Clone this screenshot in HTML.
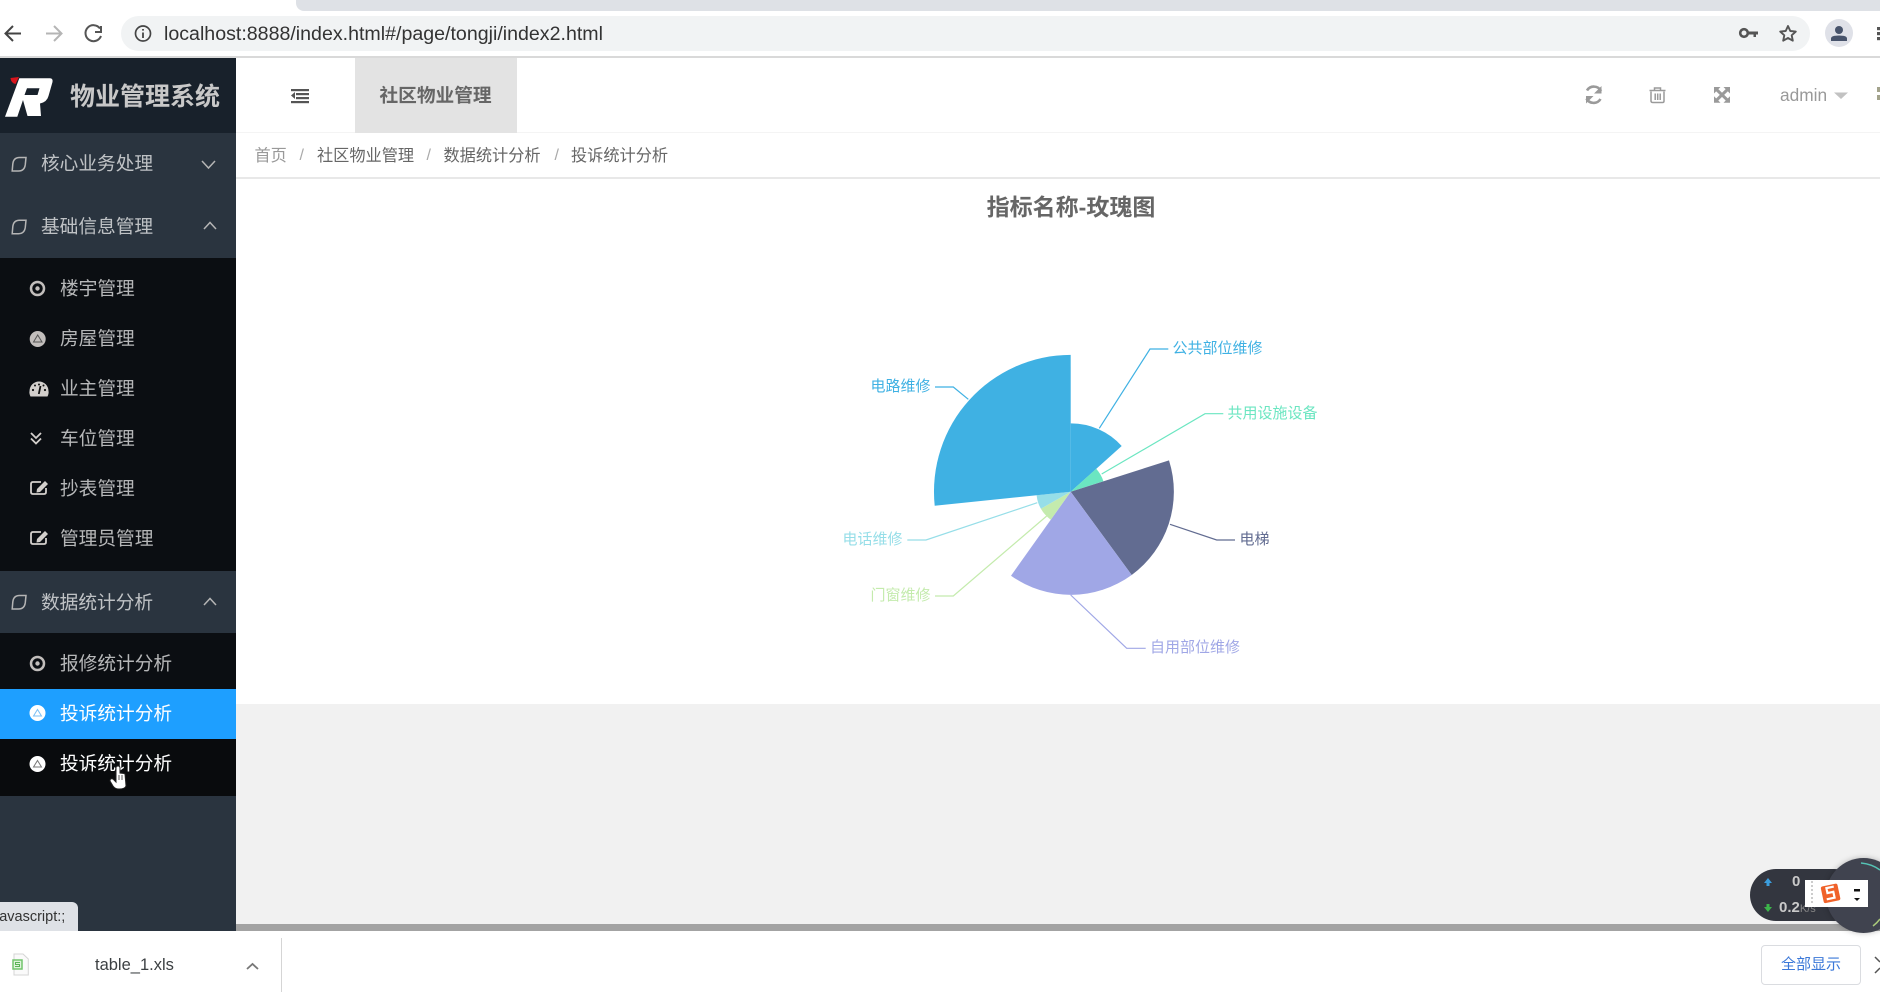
<!DOCTYPE html>
<html lang="zh"><head><meta charset="utf-8"><title>物业管理系统</title>
<style>
*{margin:0;padding:0;box-sizing:border-box}
html,body{width:1880px;height:996px;overflow:hidden;background:#fff;font-family:"Liberation Sans","Noto Sans CJK SC",sans-serif}
.a{position:absolute;white-space:nowrap}
.t{position:absolute;white-space:nowrap;line-height:24px;height:24px}
.m{color:rgba(255,255,255,.7);font-size:18.7px}
svg{position:absolute;left:0;top:0;overflow:visible}
</style></head><body>
<div class="a" style="left:296px;top:0;width:1584px;height:11px;background:#dee1e6;border-bottom-left-radius:8px"></div>
<div class="a" style="left:121px;top:16px;width:1689px;height:35px;background:#f1f3f4;border-radius:18px"></div>
<div class="a" style="left:0;top:56px;width:1880px;height:2px;background:#d9d9d9"></div>
<div class="t" style="left:164px;top:21.500px;font-size:19.600px;color:#333">localhost:8888/index.html#/page/tongji/index2.html</div>

<div class="a" style="left:0;top:58px;width:236px;height:873px;background:#2a343f"></div>
<div class="a" style="left:0;top:58px;width:236px;height:75px;background:#18212b"></div>
<div class="a" style="left:0;top:258px;width:236px;height:313px;background:#0b0e12"></div>
<div class="a" style="left:0;top:633px;width:236px;height:163px;background:#0b0e12"></div>
<div class="a" style="left:0;top:689px;width:236px;height:50px;background:#1e9fff"></div>
<div class="a" style="left:0;top:739px;width:236px;height:57px;background:#090b0d"></div>

<div class="t" style="left:70px;top:85px;font-size:25px;font-weight:700;color:#c8c8c8">物业管理系统</div>
<div class="t m" style="left:41px;top:152px">核心业务处理</div>
<div class="t m" style="left:41px;top:215px">基础信息管理</div>
<div class="t m" style="left:60px;top:277px">楼宇管理</div>
<div class="t m" style="left:60px;top:327px">房屋管理</div>
<div class="t m" style="left:60px;top:377px">业主管理</div>
<div class="t m" style="left:60px;top:427px">车位管理</div>
<div class="t m" style="left:60px;top:477px">抄表管理</div>
<div class="t m" style="left:60px;top:527px">管理员管理</div>
<div class="t m" style="left:41px;top:590.500px">数据统计分析</div>
<div class="t m" style="left:60px;top:652px">报修统计分析</div>
<div class="t m" style="left:60px;top:702px;color:#fff">投诉统计分析</div>
<div class="t m" style="left:60px;top:752px;color:#fff">投诉统计分析</div>

<div class="a" style="left:236px;top:132px;width:1644px;height:1px;background:#f4f4f4"></div>
<div class="a" style="left:355px;top:58px;width:162px;height:75px;background:#e3e3e3"></div>
<div class="t" style="left:379.500px;top:84px;font-size:18.700px;font-weight:700;color:#666">社区物业管理</div>
<div class="t" style="left:1780px;top:83px;font-size:17.300px;color:#999">admin</div>

<div class="t" style="left:254.500px;top:144px;font-size:16.200px;color:#999">首页</div>
<div class="t" style="left:299.500px;top:144px;font-size:16px;color:#aaa">/</div>
<div class="t" style="left:317px;top:144px;font-size:16.200px;color:#666">社区物业管理</div>
<div class="t" style="left:426.500px;top:144px;font-size:16px;color:#aaa">/</div>
<div class="t" style="left:443.500px;top:144px;font-size:16.200px;color:#666">数据统计分析</div>
<div class="t" style="left:554.500px;top:144px;font-size:16px;color:#aaa">/</div>
<div class="t" style="left:571px;top:144px;font-size:16.200px;color:#666">投诉统计分析</div>
<div class="a" style="left:236px;top:177px;width:1644px;height:2px;background:#e8e8e8"></div>

<div class="a" style="left:236px;top:704px;width:1644px;height:227px;background:#f1f1f1"></div>
<div class="a" style="left:236px;top:924px;width:1644px;height:7px;background:#a3a3a3"></div>
<div class="t" style="left:836px;top:195px;width:470px;text-align:center;font-size:23px;font-weight:700;color:#666">指标名称-玫瑰图</div>

<svg width="1880" height="996" viewBox="0 0 1880 996">
<!-- chart -->
<path d="M1070.7 491.7L1070.7 423.4A68.3 68.3 0 0 1 1121.7 446Z" fill="#3fb1e3"/>
<path d="M1070.7 491.7L1096.2 468.8A34.3 34.3 0 0 1 1103.4 481.3Z" fill="#6be6c1"/>
<path d="M1070.7 491.7L1169 460.4A103.3 103.3 0 0 1 1131.7 575Z" fill="#626c91"/>
<path d="M1070.7 491.7L1131.7 575A103.3 103.3 0 0 1 1011 575.7Z" fill="#a0a7e6"/>
<path d="M1070.7 491.7L1050.8 519.7A34.3 34.3 0 0 1 1040.9 508.8Z" fill="#c4ebad"/>
<path d="M1070.7 491.7L1040.9 508.8A34.3 34.3 0 0 1 1036.6 495.2Z" fill="#96dee8"/>
<path d="M1070.7 491.7L934.7 505.7A136.8 136.8 0 0 1 1070.7 354.9Z" fill="#3fb1e3"/>
<g fill="none" stroke-width="1.2">
<path d="M1099.3 428.3L1150 349H1168.3" stroke="#3fb1e3"/>
<path d="M1101.7 474L1205 413.7H1223.3" stroke="#6be6c1"/>
<path d="M1170 524.3L1216.7 540H1235" stroke="#626c91"/>
<path d="M1070.7 595L1126.7 648.3H1145.7" stroke="#a0a7e6"/>
<path d="M1046.7 516L953.3 596H935" stroke="#c4ebad"/>
<path d="M1037.3 502.7L926 540H907.3" stroke="#96dee8"/>
<path d="M968.3 399.3L953.3 387H935" stroke="#3fb1e3"/>
</g>
<g font-family="Liberation Sans,Noto Sans CJK SC,sans-serif" font-size="15">
<text x="1172.500" y="353" fill="#3fb1e3">公共部位维修</text>
<text x="1227.500" y="418" fill="#6be6c1">共用设施设备</text>
<text x="1239.500" y="544" fill="#626c91">电梯</text>
<text x="1150" y="652" fill="#a0a7e6">自用部位维修</text>
<text x="930.500" y="600" fill="#c4ebad" text-anchor="end">门窗维修</text>
<text x="902.500" y="544" fill="#96dee8" text-anchor="end">电话维修</text>
<text x="930.500" y="391" fill="#3fb1e3" text-anchor="end">电路维修</text>
</g>

<!-- browser icons -->
<g fill="none" stroke-width="2">
<path d="M21 33.500H6M13 26L5.500 33.500L13 41" stroke="#444"/>
<path d="M46 33.500H61M54 26L61.500 33.500L54 41" stroke="#b5b5b5"/>
<path d="M100 28.500A8 8 0 1 0 101 36M101 26V32H95" stroke="#555"/>
<circle cx="143" cy="33.500" r="7.500" stroke="#444" stroke-width="1.700"/>
<path d="M143 32.500V38M143 29V30.600" stroke="#444" stroke-width="1.800"/>
</g>
<circle cx="1744" cy="33" r="3.800" fill="none" stroke="#555" stroke-width="2.600"/>
<path d="M1747 31.500H1758V34.500H1756V37H1753.500V34.500H1747Z" fill="#555"/>
<path d="M1788 26L1790.300 31L1795.800 31.600L1791.700 35.300L1792.800 40.700L1788 38L1783.200 40.700L1784.300 35.300L1780.200 31.600L1785.700 31Z" fill="none" stroke="#555" stroke-width="1.900" stroke-linejoin="round"/>
<circle cx="1839" cy="33" r="14" fill="#dfe1e8"/>
<circle cx="1839" cy="30" r="4" fill="#47536b"/>
<path d="M1831 41V38.500Q1831 35.500 1839 35.500Q1847 35.500 1847 38.500V41Z" fill="#47536b"/>
<g fill="#555"><rect x="1877" y="27" width="3" height="3.200"/><rect x="1877" y="32" width="3" height="3.200"/><rect x="1877" y="37" width="3" height="3.200"/></g>

<!-- logo -->
<path fill-rule="evenodd" d="M19.300 78.300H50Q53 78.300 52.500 82L48.500 96Q47 102 40 103.500L41 116H27.500L23 100L17.300 116.700H5ZM27 88.300H39.500L37.500 95H24.500Z" fill="#fff"/>
<path d="M10.500 78L19 77L15.500 84Q11 83 10.500 78Z" fill="#d8141c"/>

<!-- hamburger -->
<g fill="#555"><rect x="291" y="89" width="18" height="2.200"/><rect x="296" y="93" width="13" height="2.200"/><rect x="296" y="97" width="13" height="2.200"/><rect x="291" y="101" width="18" height="2.200"/><path d="M295 92V99L291 95.500Z"/></g>

<!-- header icons -->
<g fill="none" stroke="#9a9a9a" stroke-width="2.600">
<path d="M1601 91A8 8 0 0 0 1587 90.500M1586.500 98.500A8 8 0 0 0 1600.500 99"/>
</g>
<path d="M1601.500 86V93.500H1594ZM1586 103.500V96H1593.500Z" fill="#9a9a9a"/>
<g fill="none" stroke="#9a9a9a" stroke-width="1.500"><path d="M1651 91.500V101Q1651 102.500 1653 102.500H1662.500Q1664 102.500 1664 101V91.500M1649.500 90.500H1665.500M1654.500 90.500V88H1660.500V90.500M1655.200 93.500V100M1657.700 93.500V100M1660.200 93.500V100"/></g>
<path d="M1714 87H1720.500L1714 93.500ZM1730 87H1723.500L1730 93.500ZM1714 102.700H1720.500L1714 96.200ZM1730 102.700H1723.500L1730 96.200Z" fill="#9a9a9a"/>
<path d="M1716.500 89.500L1727.500 100.200M1727.500 89.500L1716.500 100.200" stroke="#9a9a9a" stroke-width="3"/>
<path d="M1834 92.500H1848L1841 99Z" fill="#c2c2c2"/>
<g fill="#a3a38c"><rect x="1877" y="87" width="3" height="5"/><rect x="1877" y="95" width="3" height="5"/></g>

<!-- sidebar icons -->
<g fill="none" stroke="#b5b5b5" stroke-width="1.500">
<path d="M26 157.500H19.500Q13.500 157.500 12.800 164L12.200 171H18.500Q24.500 171 25.300 164.500Z"/>
<path d="M26 220.200H19.500Q13.500 220.200 12.800 226.700L12.200 233.700H18.500Q24.500 233.700 25.300 227.200Z"/>
<path d="M26 595.500H19.500Q13.500 595.500 12.800 602L12.200 609H18.500Q24.500 609 25.300 602.500Z"/>
<path d="M202 161L208.500 168L215 161"/>
<path d="M204 229L210 222.500L216 229"/>
<path d="M204 605L210 598.500L216 605"/>
</g>
<g fill="none" stroke="#c2bebc">
<circle cx="37.500" cy="288.500" r="6.500" stroke-width="2.500"/><circle cx="37.500" cy="663.500" r="6.500" stroke-width="2.500"/>
</g>
<circle cx="37.500" cy="288.500" r="2.200" fill="#c2bebc"/><circle cx="37.500" cy="663.500" r="2.200" fill="#c2bebc"/>
<circle cx="37.700" cy="339" r="8" fill="#c2bebc"/><path d="M33.500 342L37.700 335L42 342Z" fill="none" stroke="#555" stroke-width="1"/>
<path d="M30.500 396.500Q29 393.500 29.500 391A9.500 9.500 0 0 1 48.500 391Q49 393.500 47.500 396.500Z" fill="#d3cfcc"/><path d="M38.800 394L40.500 386" stroke="#111" stroke-width="1.800"/><circle cx="33" cy="390" r="1.100" fill="#111"/><circle cx="45" cy="390" r="1.100" fill="#111"/><circle cx="35" cy="385.500" r="1" fill="#111"/><circle cx="39" cy="384.500" r="1" fill="#111"/><circle cx="43.500" cy="385.500" r="1" fill="#111"/>
<g fill="none" stroke="#d3cfcc" stroke-width="1.800"><path d="M31 433L36 438L41 433M31 438.500L36 443.500L41 438.500"/>
<path d="M46 488V492Q46 494 44 494H33Q31 494 31 492V484Q31 482 33 482H41"/><path d="M46 538V542Q46 544 44 544H33Q31 544 31 542V534Q31 532 33 532H41"/></g>
<path d="M37 489L45 481L48 484L40 492L36.500 492.500ZM37 539L45 531L48 534L40 542L36.500 542.500Z" fill="#d3cfcc"/>
<circle cx="37.500" cy="713" r="8" fill="#fff"/><path d="M33.500 716L37.500 709.500L41.500 716Z" fill="none" stroke="#7cc0f5" stroke-width="1"/>
<circle cx="37.500" cy="764" r="8" fill="#fff"/><path d="M33.500 767L37.500 760.500L41.500 767Z" fill="none" stroke="#777" stroke-width="1"/>
<path d="M116 768Q116 766 118 766Q120 766 120 768V773L124 773.500L125 774L126 786Q125 789 119 789Q115 789 113 786L110 781Q110 778 113 779L116 782Z" fill="#fff" stroke="#222" stroke-width="1"/>
<path d="M119 775V780M122 775V780" stroke="#333" stroke-width=".8"/>

<!-- download bar -->
<path d="M14 954H23L28.300 959V975H14Z" fill="#fafafa" stroke="#d5d5d5"/>
<rect x="13" y="960" width="9" height="9" fill="#dff3dc" stroke="#72c56d" stroke-width="1.500"/>
<path d="M20 962.500H15.500V964.500H19.500V966.500H15" fill="none" stroke="#5bb456" stroke-width="1"/>
<path d="M247 969L252.500 964L258 969" fill="none" stroke="#777" stroke-width="1.800"/>
<path d="M1875 957L1880 962M1880 968L1875 973" stroke="#555" stroke-width="1.500" fill="none"/>
</svg>

<div class="a" style="left:0;top:902px;width:78px;height:29px;background:#dee1e6;border-top-right-radius:6px;overflow:hidden">
<div class="t" style="left:-4px;top:3px;font-size:14.500px;color:#333">javascript:;</div></div>
<div class="a" style="left:281px;top:938px;width:1px;height:54px;background:#d5d5d5"></div>
<div class="t" style="left:95px;top:953px;font-size:16.500px;color:#3c4043">table_1.xls</div>
<div class="a" style="left:1761px;top:945px;width:100px;height:40px;border:1px solid #dadce0;border-radius:4px;text-align:center;line-height:38px;font-size:15px;color:#3b78d8">全部显示</div>

<!-- floating widget -->
<div class="a" style="left:1750px;top:869px;width:110px;height:52px;background:#33363f;border-radius:26px"></div>
<div class="a" style="left:1826px;top:858px;width:75px;height:75px;background:#40434f;border-radius:50%;box-shadow:0 0 6px rgba(0,0,0,.25)"></div>
<div class="t" style="left:1792px;top:870px;font-size:15px;font-weight:700;color:#c9c9c9">0</div>
<div class="t" style="left:1779px;top:896px;font-size:15px;font-weight:700;color:#c9c9c9">0.2<span style="font-size:11px;font-weight:400;color:#888">K/s</span></div>
<svg width="1880" height="996" viewBox="0 0 1880 996">
<path d="M1768 878L1764 883H1766.500V886H1769.500V883H1772Z" fill="#3b9ddd"/>
<path d="M1768 912L1764 907H1766.500V904H1769.500V907H1772Z" fill="#3cb54a"/>
<path d="M1861 863Q1872 864 1880 870" fill="none" stroke="#55c3b5" stroke-width="1.500"/>
<path d="M1873 926Q1877 923 1880 919" fill="none" stroke="#a9c97a" stroke-width="1.500"/>
</svg>
<div class="a" style="left:1805px;top:880px;width:63px;height:27px;background:#fff"></div>
<svg width="1880" height="996" viewBox="0 0 1880 996">
<g fill="#ccc"><rect x="1811" y="881" width="2" height="2"/><rect x="1811" y="885" width="2" height="2"/><rect x="1811" y="889" width="2" height="2"/><rect x="1811" y="893" width="2" height="2"/><rect x="1811" y="897" width="2" height="2"/><rect x="1811" y="901" width="2" height="2"/></g>
<rect x="1822" y="885" width="17" height="17" rx="2" fill="#f0622a" transform="rotate(-12 1830 893)"/>
<path d="M1835 887.500H1827.500V892.500H1833.500V898.500H1825.500" fill="none" stroke="#fff" stroke-width="2.200" transform="rotate(-12 1830 893)"/>
<rect x="1854" y="889" width="6" height="2.500" fill="#111"/>
<path d="M1854 898H1860L1857 901Z" fill="#111"/>
</svg>
</body></html>
